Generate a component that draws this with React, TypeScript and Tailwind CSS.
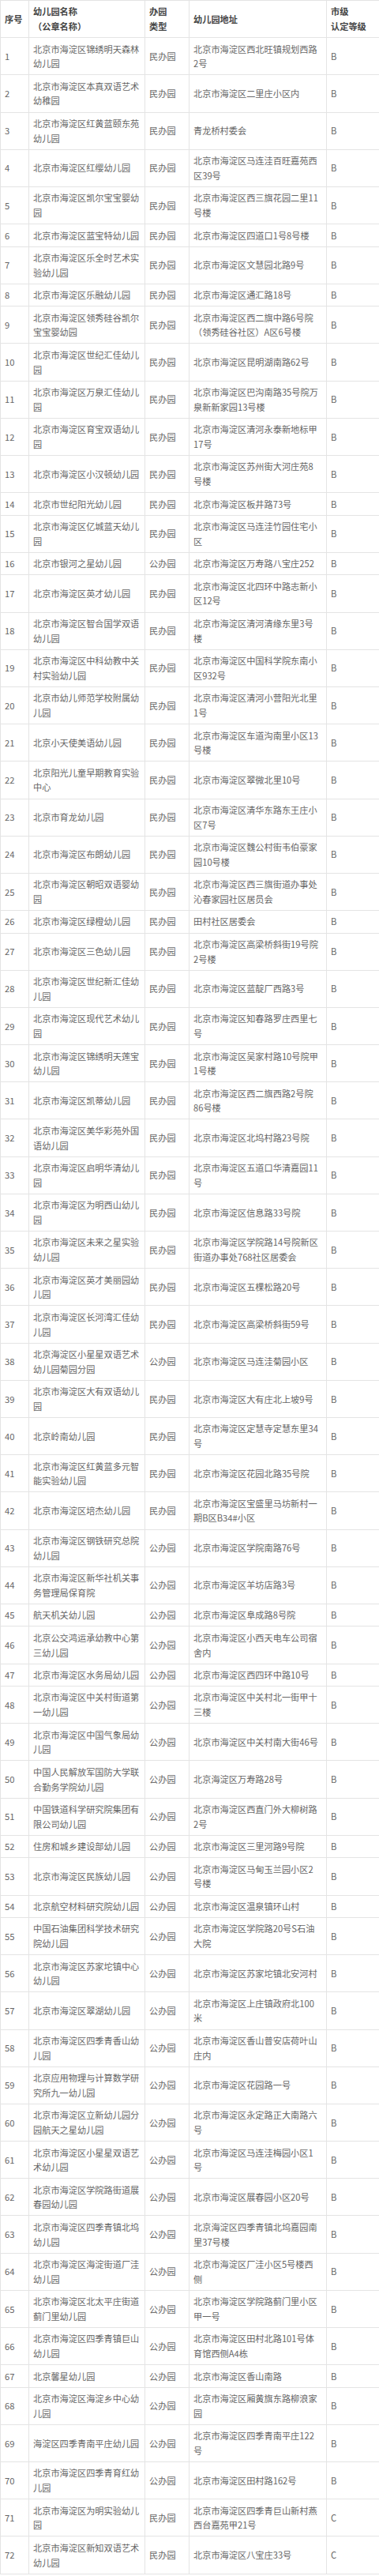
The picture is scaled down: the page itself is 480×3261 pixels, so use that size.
import React from "react";

type Row = [string, string, string, string];

const rows: Row[] = [
  ["北京市海淀区锦绣明天森林幼儿园", "民办园", "北京市海淀区西北旺镇规划西路2号", "B"],
  ["北京市海淀区本真双语艺术幼稚园", "民办园", "北京市海淀区二里庄小区内", "B"],
  ["北京市海淀区红黄蓝颐东苑幼儿园", "民办园", "青龙桥村委会", "B"],
  ["北京市海淀区红缨幼儿园", "民办园", "北京市海淀区马连洼百旺嘉苑西区39号", "B"],
  ["北京市海淀区凯尔宝宝婴幼园", "民办园", "北京市海淀区西三旗花园二里11号楼", "B"],
  ["北京市海淀区蓝宝特幼儿园", "民办园", "北京市海淀区四道口1号8号楼", "B"],
  ["北京市海淀区乐全时艺术实验幼儿园", "民办园", "北京市海淀区文慧园北路9号", "B"],
  ["北京市海淀区乐融幼儿园", "民办园", "北京市海淀区通汇路18号", "B"],
  ["北京市海淀区领秀硅谷凯尔宝宝婴幼园", "民办园", "北京市海淀区西二旗中路6号院（领秀硅谷社区）A区6号楼", "B"],
  ["北京市海淀区世纪汇佳幼儿园", "民办园", "北京市海淀区昆明湖南路62号", "B"],
  ["北京市海淀区万泉汇佳幼儿园", "民办园", "北京市海淀区巴沟南路35号院万泉新新家园13号楼", "B"],
  ["北京市海淀区育宝双语幼儿园", "民办园", "北京市海淀区清河永泰新地标甲17号", "B"],
  ["北京市海淀区小汉顿幼儿园", "民办园", "北京市海淀区苏州街大河庄苑8号楼", "B"],
  ["北京市世纪阳光幼儿园", "民办园", "北京市海淀区板井路73号", "B"],
  ["北京市海淀区亿城蓝天幼儿园", "民办园", "北京市海淀区马连洼竹园住宅小区", "B"],
  ["北京市银河之星幼儿园", "公办园", "北京市海淀区万寿路八宝庄252", "B"],
  ["北京市海淀区英才幼儿园", "民办园", "北京市海淀区北四环中路志新小区12号", "B"],
  ["北京市海淀区智合国学双语幼儿园", "民办园", "北京市海淀区清河清缘东里3号楼", "B"],
  ["北京市海淀区中科幼教中关村实验幼儿园", "民办园", "北京市海淀区中国科学院东南小区932号", "B"],
  ["北京市幼儿师范学校附属幼儿园", "民办园", "北京市海淀区清河小营阳光北里1号", "B"],
  ["北京小天使美语幼儿园", "民办园", "北京市海淀区车道沟南里小区13号楼", "B"],
  ["北京阳光儿童早期教育实验中心", "民办园", "北京市海淀区翠微北里10号", "B"],
  ["北京市育龙幼儿园", "民办园", "北京市海淀区清华东路东王庄小区7号", "B"],
  ["北京市海淀区布朗幼儿园", "民办园", "北京市海淀区魏公村街韦伯豪家园10号楼", "B"],
  ["北京市海淀区朝昭双语婴幼园", "民办园", "北京市海淀区西三旗街道办事处沁春家园社区居员会", "B"],
  ["北京市海淀区绿橙幼儿园", "民办园", "田村社区居委会", "B"],
  ["北京市海淀区三色幼儿园", "民办园", "北京市海淀区高梁桥斜街19号院2号楼", "B"],
  ["北京市海淀区世纪新汇佳幼儿园", "民办园", "北京市海淀区蓝靛厂西路3号", "B"],
  ["北京市海淀区现代艺术幼儿园", "民办园", "北京市海淀区知春路罗庄西里七号", "B"],
  ["北京市海淀区锦绣明天莲宝幼儿园", "民办园", "北京市海淀区吴家村路10号院甲1号楼", "B"],
  ["北京市海淀区凯蒂幼儿园", "民办园", "北京市海淀区西二旗西路2号院86号楼", "B"],
  ["北京市海淀区美华彩苑外国语幼儿园", "民办园", "北京市海淀区北坞村路23号院", "B"],
  ["北京市海淀区启明华清幼儿园", "民办园", "北京市海淀区五道口华清嘉园11号", "B"],
  ["北京市海淀区为明西山幼儿园", "民办园", "北京市海淀区信息路33号院", "B"],
  ["北京市海淀区未来之星实验幼儿园", "民办园", "北京市海淀区学院路14号院新区街道办事处768社区居委会", "B"],
  ["北京市海淀区英才美丽园幼儿园", "民办园", "北京市海淀区五棵松路20号", "B"],
  ["北京市海淀区长河湾汇佳幼儿园", "民办园", "北京市海淀区高梁桥斜街59号", "B"],
  ["北京海淀区小星星双语艺术幼儿园菊园分园", "公办园", "北京市海淀区马连洼菊园小区", "B"],
  ["北京市海淀区大有双语幼儿园", "民办园", "北京市海淀区大有庄北上坡9号", "B"],
  ["北京岭南幼儿园", "民办园", "北京市海淀区定慧寺定慧东里34号", "B"],
  ["北京市海淀区红黄蓝多元智能实验幼儿园", "民办园", "北京市海淀区花园北路35号院", "B"],
  ["北京市海淀区培杰幼儿园", "民办园", "北京市海淀区宝盛里马坊新村一期B区B34#小区", "B"],
  ["北京市海淀区钢铁研究总院幼儿园", "公办园", "北京市海淀区学院南路76号", "B"],
  ["北京市海淀区新华社机关事务管理局保育院", "公办园", "北京市海淀区羊坊店路3号", "B"],
  ["航天机关幼儿园", "公办园", "北京市海淀区阜成路8号院", "B"],
  ["北京公交鸿运承幼教中心第三幼儿园", "公办园", "北京市海淀区小西天电车公司宿舍内", "B"],
  ["北京市海淀区水务局幼儿园", "公办园", "北京市海淀区西四环中路10号", "B"],
  ["北京市海淀区中关村街道第一幼儿园", "公办园", "北京市海淀区中关村北一街甲十三楼", "B"],
  ["北京市海淀区中国气象局幼儿园", "公办园", "北京市海淀区中关村南大街46号", "B"],
  ["中国人民解放军国防大学联合勤务学院幼儿园", "公办园", "北京海淀区万寿路28号", "B"],
  ["中国铁道科学研究院集团有限公司幼儿园", "公办园", "北京市海淀区西直门外大柳树路2号", "B"],
  ["住房和城乡建设部幼儿园", "公办园", "北京市海淀区三里河路9号院", "B"],
  ["北京市海淀区民族幼儿园", "公办园", "北京市海淀区马甸玉兰园小区2号楼", "B"],
  ["北京航空材料研究院幼儿园", "公办园", "北京市海淀区温泉镇环山村", "B"],
  ["中国石油集团科学技术研究院幼儿园", "公办园", "北京市海淀区学院路20号S石油大院", "B"],
  ["北京市海淀区苏家坨镇中心幼儿园", "公办园", "北京市海淀区苏家坨镇北安河村", "B"],
  ["北京市海淀区翠湖幼儿园", "公办园", "北京市海淀区上庄镇政府北100米", "B"],
  ["北京市海淀区四季青香山幼儿园", "公办园", "北京市海淀区香山普安店荷叶山庄内", "B"],
  ["北京应用物理与计算数学研究所九一幼儿园", "公办园", "北京市海淀区花园路一号", "B"],
  ["北京市海淀区立新幼儿园分园航天之星幼儿园", "公办园", "北京市海淀区永定路正大南路六号", "B"],
  ["北京市海淀区小星星双语艺术幼儿园", "公办园", "北京市海淀区马连洼梅园小区1号", "B"],
  ["北京市海淀区学院路街道展春园幼儿园", "公办园", "北京市海淀区展春园小区20号", "B"],
  ["北京市海淀区四季青镇北坞幼儿园", "公办园", "北京海淀区四季青镇北坞嘉园南里37号楼", "B"],
  ["北京市海淀区海淀街道厂洼幼儿园", "公办园", "北京市海淀区厂洼小区5号楼西侧", "B"],
  ["北京市海淀区北太平庄街道蓟门里幼儿园", "公办园", "北京市海淀区学院路蓟门里小区甲一号", "B"],
  ["北京市海淀区四季青镇巨山幼儿园", "公办园", "北京市海淀区田村北路101号体育馆西侧A4栋", "B"],
  ["北京馨星幼儿园", "公办园", "北京市海淀区香山南路", "B"],
  ["北京市海淀区海淀乡中心幼儿园", "公办园", "北京市海淀区厢黄旗东路柳浪家园", "B"],
  ["海淀区四季青南平庄幼儿园", "公办园", "北京市海淀区四季青南平庄122号", "B"],
  ["北京市海淀区四季青育红幼儿园", "公办园", "北京市海淀区田村路162号", "B"],
  ["北京市海淀区为明实验幼儿园", "民办园", "北京市海淀区四季青巨山新村燕西台嘉苑甲21号", "C"],
  ["北京市海淀区新知双语艺术幼儿园", "民办园", "北京市海淀区八宝庄33号", "C"],
];

const cell =
  "border border-[#e4e4e4] pl-[5px] pr-[5px] py-[4.4px] align-middle text-left text-[11.2px] leading-[18.7px] break-all";
const addrCell =
  "border border-[#e4e4e4] pl-[5px] pr-[7px] py-[4.4px] align-middle text-left text-[11.2px] leading-[18.7px]";

export default function App() {
  return (
    <div
      className="w-[480px] bg-white overflow-hidden"
      style={{ fontFamily: '"Noto Sans CJK SC", "Noto Sans", sans-serif' }}
    >
      <table className="w-[480px] table-fixed border-collapse text-[#666666]">
        <colgroup>
          <col className="w-[36px]" />
          <col className="w-[147px]" />
          <col className="w-[56px]" />
          <col className="w-[174px]" />
          <col className="w-[67px]" />
        </colgroup>
        <thead>
          <tr className="font-bold text-[#444444]">
            <th className={cell}>序号</th>
            <th className={cell}>
              幼儿园名称
              <br />
              （公章名称）
            </th>
            <th className={cell}>
              办园
              <br />
              类型
            </th>
            <th className={addrCell}>幼儿园地址</th>
            <th className={cell}>
              市级
              <br />
              认定等级
            </th>
          </tr>
        </thead>
        <tbody>
          {rows.map((r, i) => (
            <tr key={i}>
              <td className={cell}>{i + 1}</td>
              <td className={cell}>{r[0]}</td>
              <td className={cell}>{r[1]}</td>
              <td className={addrCell}>{r[2]}</td>
              <td className={cell}>{r[3]}</td>
            </tr>
          ))}
        </tbody>
      </table>
    </div>
  );
}
